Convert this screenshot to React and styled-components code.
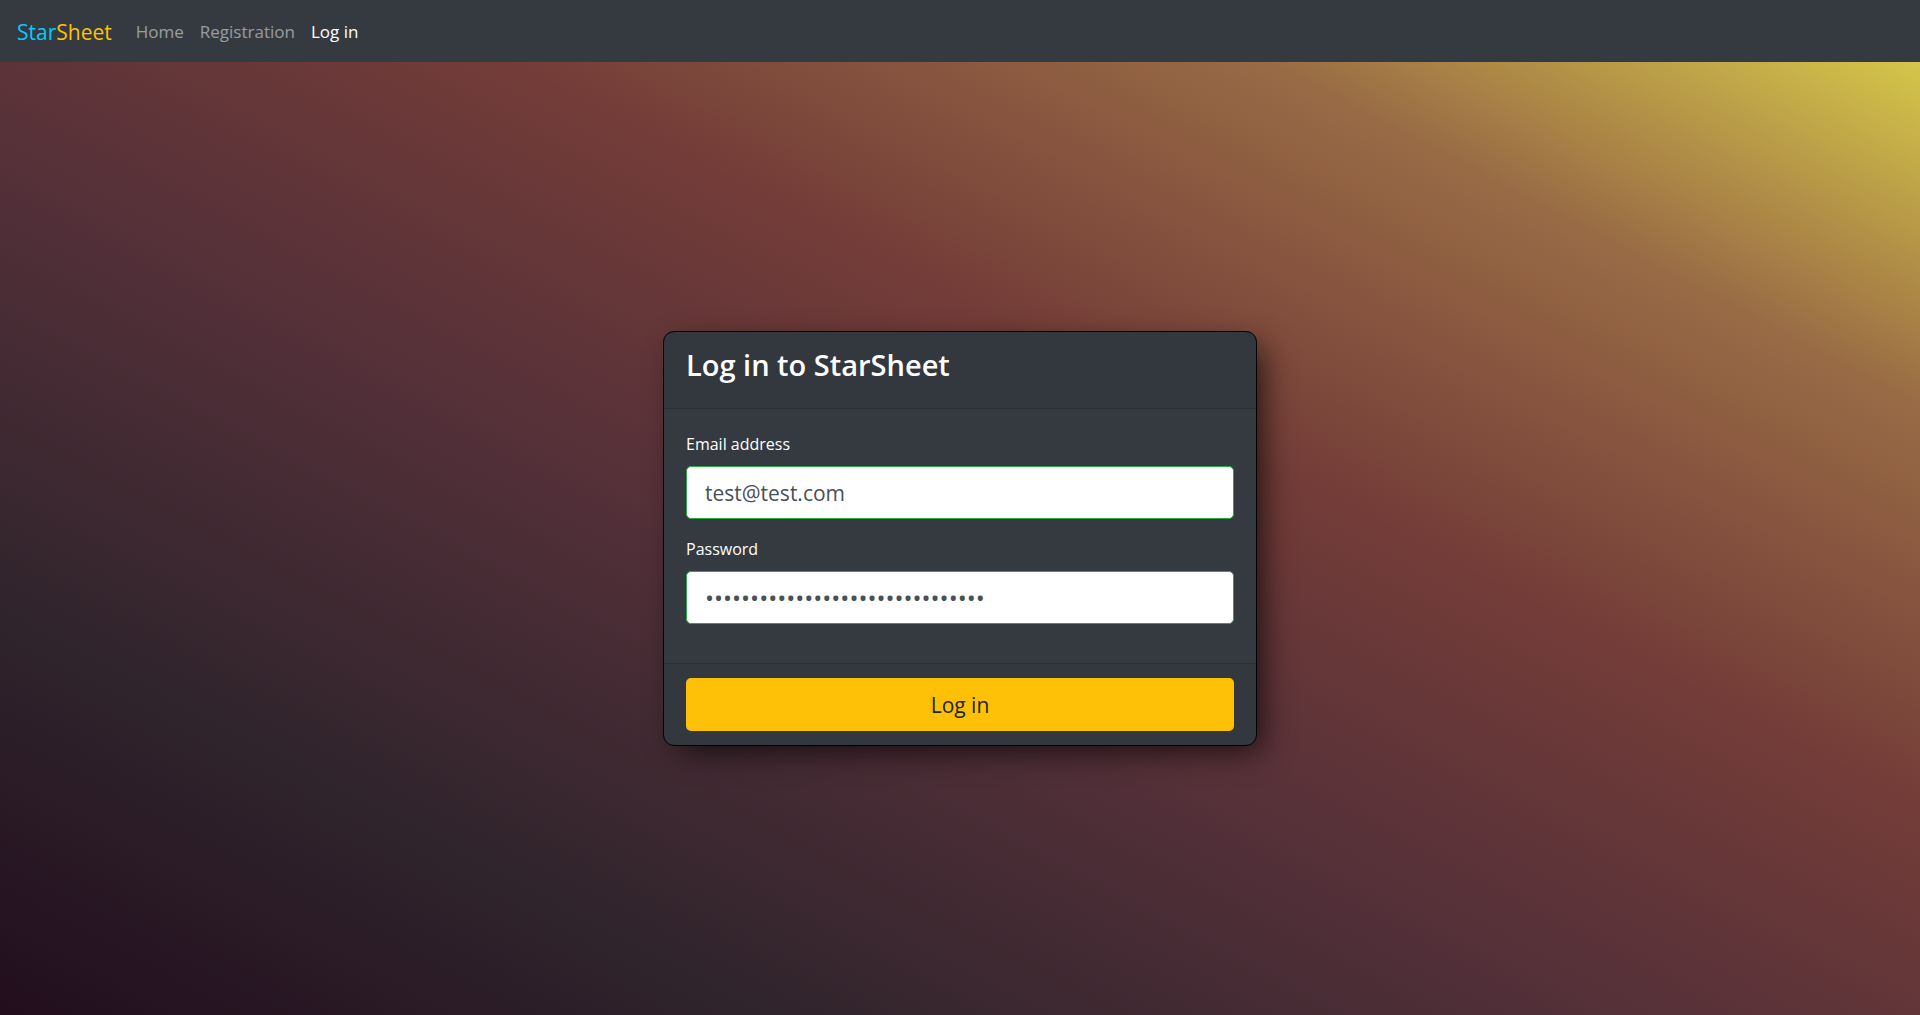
import React, { useState } from "react";
import styled, { createGlobalStyle } from "styled-components";

const GlobalStyle = createGlobalStyle`
  *, *::before, *::after { box-sizing: border-box; }
  body {
    margin: 0;
    font-family: "Segoe UI", "Open Sans", "Noto Sans", sans-serif;
    font-size: 17px;
    line-height: 26px;
    color: #fff;
  }
`;

const Page = styled.div`
  min-height: 100vh;
  display: flex;
  flex-direction: column;
  background: linear-gradient(to top right, #220e1d, #30242c, #512f38, #733c38, #996b45, #e0d64b);
`;

const Navbar = styled.nav`
  display: flex;
  align-items: center;
  gap: 24px;
  height: 62px;
  padding: 2px 17px 0;
  background: #343a40;
`;

const Brand = styled.a`
  color: #0cf;
  font-size: 21px;
  line-height: 33px;
  text-decoration: none;
`;

const BrandAccent = styled.span`
  color: #ffc107;
`;

const NavList = styled.ul`
  display: flex;
  gap: 16px;
  margin: 0;
  padding: 0;
  list-style: none;
`;

const NavLink = styled.a`
  color: ${(p) => (p.$active ? "#fff" : "rgba(255, 255, 255, 0.5)")};
  text-decoration: none;
`;

const Main = styled.main`
  flex: 1;
  display: flex;
  align-items: center;
  justify-content: center;
  padding: 16px;
`;

const Card = styled.form`
  width: 100%;
  max-width: 594px;
  border: 1px solid #000;
  border-radius: 11px;
  background: #343a40;
  box-shadow: 10px 10px 32px -6px rgba(0, 0, 0, 0.75);
  overflow: hidden;
`;

const CardHeader = styled.header`
  padding: 14px 22px 25px;
  background: rgba(0, 0, 0, 0.03);
  border-bottom: 1px solid rgba(0, 0, 0, 0.125);
`;

const Title = styled.h1`
  margin: 0;
  font-size: 29px;
  font-weight: 600;
  line-height: 37px;
`;

const CardBody = styled.div`
  display: flex;
  flex-direction: column;
  gap: 17px;
  padding: 22px 22px 39px;
`;

const Field = styled.div`
  display: flex;
  flex-direction: column;
  gap: 9px;
`;

const Label = styled.label`
  font-size: 16px;
`;

const Input = styled.input`
  width: 100%;
  height: 53px;
  padding: 9px 18px;
  border: 1px solid #28a745;
  border-radius: 5px;
  background: #fff;
  color: #495057;
  font-family: inherit;
  font-size: ${(p) => (p.type === "password" ? "24px" : "21px")};
  line-height: 33px;
  outline: none;
`;

const CardFooter = styled.footer`
  padding: 14px 22px;
  background: rgba(0, 0, 0, 0.03);
  border-top: 1px solid rgba(0, 0, 0, 0.125);
`;

const SubmitButton = styled.button`
  display: block;
  width: 100%;
  height: 53px;
  padding: 2px 18px 0;
  border: 0;
  border-radius: 5px;
  background: #ffc107;
  color: #212529;
  font-family: inherit;
  font-size: 21px;
  line-height: 33px;
  cursor: pointer;
`;

const links = [
  { label: "Home", href: "#home" },
  { label: "Registration", href: "#registration" },
  { label: "Log in", href: "#login", active: true },
];

export default function App() {
  const [email, setEmail] = useState("test@test.com");
  const [password, setPassword] = useState("x".repeat(31));

  return (
    <>
      <GlobalStyle />
      <Page>
        <Navbar>
          <Brand href="#home">
            Star<BrandAccent>Sheet</BrandAccent>
          </Brand>
          <NavList>
            {links.map((link) => (
              <li key={link.label}>
                <NavLink href={link.href} $active={link.active}>
                  {link.label}
                </NavLink>
              </li>
            ))}
          </NavList>
        </Navbar>
        <Main>
          <Card onSubmit={(e) => e.preventDefault()}>
            <CardHeader>
              <Title>Log in to StarSheet</Title>
            </CardHeader>
            <CardBody>
              <Field>
                <Label htmlFor="email">Email address</Label>
                <Input id="email" type="email" value={email} onChange={(e) => setEmail(e.target.value)} />
              </Field>
              <Field>
                <Label htmlFor="password">Password</Label>
                <Input id="password" type="password" value={password} onChange={(e) => setPassword(e.target.value)} />
              </Field>
            </CardBody>
            <CardFooter>
              <SubmitButton type="submit">Log in</SubmitButton>
            </CardFooter>
          </Card>
        </Main>
      </Page>
    </>
  );
}
